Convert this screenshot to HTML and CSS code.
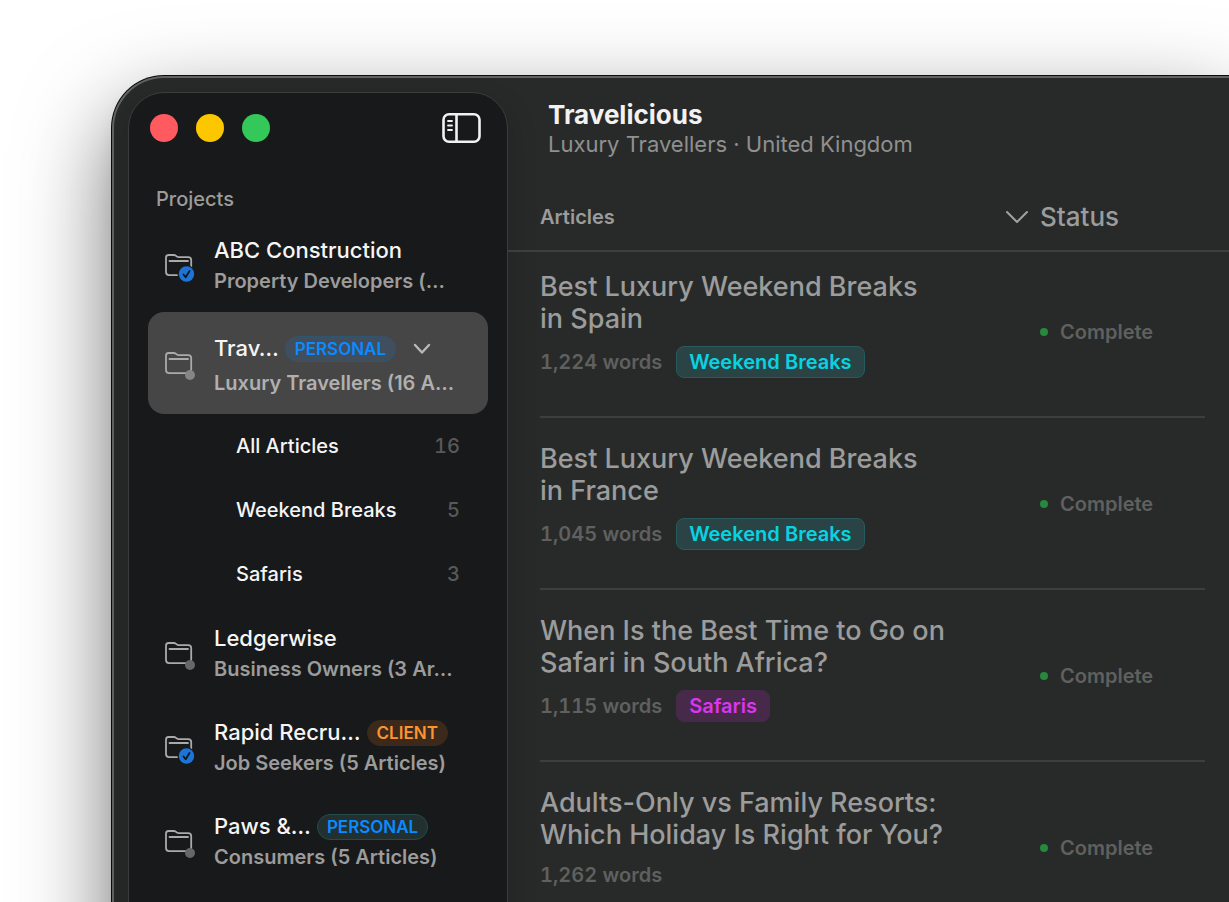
FILE: index.html
```html
<!DOCTYPE html>
<html lang="en">
    <head>
        <meta charset="utf-8">
        <meta name="viewport" content="width=device-width, initial-scale=1.0">
        <title>Travelicious</title>
        <link rel="stylesheet" href="styles.css">
    </head>
    <body>
        <!-- shared icon shapes -->
        <svg class="defs" aria-hidden="true">
            <symbol id="folder" viewBox="0 0 32 34">
                <path d="M4.5 7h5.3c1 0 1.6.3 2.3.9l.6.5c.6.5 1 .7 1.9.7h9.6c2 0 3 1 3 3v12c0 2-1 3-3 3H5c-2 0-3-1-3-3V9.800C2 8 2.800 7 4.500 7z"/>
                <path d="M5.500 13h18.500"/>
            </symbol>
        </svg>
        <div class="window">
            <aside class="sidebar">
                <div class="titlebar">
                    <div class="lights">
                        <button class="light close" aria-label="Close"></button>
                        <button class="light minimize" aria-label="Minimize"></button>
                        <button class="light zoom" aria-label="Zoom"></button>
                    </div>
                    <button class="toggle" aria-label="Toggle sidebar">
                        <svg width="40" height="32" viewBox="0 0 40 32">
                            <rect x="1.500" y="2.300" width="36" height="27.400" rx="5.500" stroke-width="2.600"/>
                            <path d="M14.500 3v26" stroke-width="2.600" stroke-linecap="butt"/>
                            <path d="M6 9h4M6 13.500h4M6 18h4" stroke-width="1.800"/>
                        </svg>
                    </button>
                </div>
                <h2 class="heading">Projects</h2>
                <ul class="projects">
                    <li class="project">
                        <svg class="icon" width="32" height="34">
                            <use href="#folder"/>
                            <circle class="cut" cx="22.500" cy="26" r="9"/>
                            <circle class="synced" cx="22.500" cy="26" r="7.700"/>
                            <path class="tick" d="M19.500 26.500l2.200 2.700 3.800-6.200"/>
                        </svg>
                        <div class="info">
                            <div class="name"><a href="#abc">ABC Construction</a></div>
                            <div class="sub">Property Developers (…</div>
                        </div>
                    </li>
                    <li class="project selected">
                        <svg class="icon" width="32" height="34">
                            <use href="#folder"/>
                            <circle class="idle" cx="26" cy="29" r="5"/>
                        </svg>
                        <div class="info">
                            <div class="name">
                                <a href="#travelicious">Trav…</a>
                                <span class="badge personal">PERSONAL</span>
                                <button class="expand" aria-label="Collapse project">
                                    <svg width="18" height="12" viewBox="0 0 18 12"><path d="M2 2l7 7.500L16 2"/></svg>
                                </button>
                            </div>
                            <div class="sub">Luxury Travellers (16 A…</div>
                        </div>
                    </li>
                    <li class="category"><a href="#all">All Articles</a><span class="count">16</span></li>
                    <li class="category"><a href="#weekend-breaks">Weekend Breaks</a><span class="count">5</span></li>
                    <li class="category"><a href="#safaris">Safaris</a><span class="count">3</span></li>
                    <li class="project">
                        <svg class="icon" width="32" height="34">
                            <use href="#folder"/>
                            <circle class="idle" cx="26" cy="29" r="5"/>
                        </svg>
                        <div class="info">
                            <div class="name"><a href="#ledgerwise">Ledgerwise</a></div>
                            <div class="sub">Business Owners (3 Ar…</div>
                        </div>
                    </li>
                    <li class="project">
                        <svg class="icon" width="32" height="34">
                            <use href="#folder"/>
                            <circle class="cut" cx="22.500" cy="26" r="9"/>
                            <circle class="synced" cx="22.500" cy="26" r="7.700"/>
                            <path class="tick" d="M19.500 26.500l2.200 2.700 3.800-6.200"/>
                        </svg>
                        <div class="info">
                            <div class="name"><a href="#rapid">Rapid Recru…</a><span class="badge client">CLIENT</span></div>
                            <div class="sub">Job Seekers (5 Articles)</div>
                        </div>
                    </li>
                    <li class="project">
                        <svg class="icon" width="32" height="34">
                            <use href="#folder"/>
                            <circle class="idle" cx="26" cy="29" r="5"/>
                        </svg>
                        <div class="info">
                            <div class="name"><a href="#paws">Paws &amp;…</a><span class="badge personal">PERSONAL</span></div>
                            <div class="sub">Consumers (5 Articles)</div>
                        </div>
                    </li>
                </ul>
            </aside>
            <main class="content">
                <header class="header">
                    <h1>Travelicious</h1>
                    <p>Luxury Travellers · United Kingdom</p>
                </header>
                <table class="articles">
                    <thead>
                        <tr>
                            <th class="col-article">Articles
                                <svg width="24" height="16" viewBox="0 0 24 16"><path d="M2 3l10 10L22 3"/></svg>
                            </th>
                            <th class="col-status">Status</th>
                        </tr>
                    </thead>
                    <tbody>
                        <tr>
                            <td>
                                <div class="title">Best Luxury Weekend Breaks<br>in Spain</div>
                                <div class="meta">1,224 words <span class="tag weekend">Weekend Breaks</span></div>
                            </td>
                            <td class="status">Complete</td>
                        </tr>
                        <tr>
                            <td>
                                <div class="title">Best Luxury Weekend Breaks<br>in France</div>
                                <div class="meta">1,045 words <span class="tag weekend">Weekend Breaks</span></div>
                            </td>
                            <td class="status">Complete</td>
                        </tr>
                        <tr>
                            <td>
                                <div class="title">When Is the Best Time to Go on<br>Safari in South Africa?</div>
                                <div class="meta">1,115 words <span class="tag safari">Safaris</span></div>
                            </td>
                            <td class="status">Complete</td>
                        </tr>
                        <tr>
                            <td>
                                <div class="title">Adults-Only vs Family Resorts:<br>Which Holiday Is Right for You?</div>
                                <div class="meta">1,262 words</div>
                            </td>
                            <td class="status">Complete</td>
                        </tr>
                    </tbody>
                </table>
            </main>
        </div>
    </body>
</html>
```
FILE: styles.css
```css
*{
    box-sizing:border-box;
}
body{
    margin:0;
    height:100vh;
    padding:76px 0 0 112px;
    overflow:hidden;
    background-color:white;
    font-family:Inter, "Liberation Sans", sans-serif;
    font-size:20px;
    font-weight:500;
    color:#9b9c9b;
}
h1, h2, p, ul{
    margin:0;
    padding:0;
}
a{
    color:inherit;
    text-decoration:none;
}
button{
    padding:0;
    border:0;
    background:none;
}
svg{
    display:block;
    fill:none;
    stroke-linecap:round;
    stroke-linejoin:round;
}
.defs{
    position:absolute;
    width:0;
    height:0;
}

/* window frame runs off the right and bottom edges */
.window{
    display:flex;
    min-height:100vh;
    padding:14px 0 0 14px;
    border:2px solid #626463;
    border-width:2px 0 0 2px;
    border-radius:52px 0 0 0;
    background-color:#282a29;
    box-shadow:0 0 0 1px #0b0c0b, 0 36px 90px rgba(0,0,0,.56);
}

.sidebar{
    flex:0 0 380px;
    padding:19px 19px 0;
    border:1px solid #3b3d3c;
    border-radius:36px 36px 0 0;
    background-color:#18191a;
    box-shadow:0 12px 24px 8px rgba(0,0,0,.1);
}
.titlebar{
    display:flex;
    align-items:center;
    justify-content:space-between;
    padding:0 6px 0 2px;
}
.lights{
    display:flex;
    gap:18px;
}
.light{
    width:28px;
    height:28px;
    border-radius:50%;
}
.close{
    background-color:#ff5a5f;
}
.minimize{
    background-color:#fdc700;
}
.zoom{
    background-color:#34c759;
}
.toggle{
    stroke:#f2f2f2;
}
.heading{
    padding:41px 8px 5px;
    font-size:20px;
    font-weight:500;
    line-height:28px;
    color:#9b9c9b;
}
.projects{
    list-style:none;
}
.project{
    display:flex;
    align-items:center;
    gap:18px;
    height:94px;
    padding:0 8px 0 16px;
    white-space:nowrap;
}
.project.selected{
    height:102px;
    border-radius:16px;
    background-color:#464646;
}
.info{
    padding-top:2px;
}
.selected .info{
    padding-top:6px;
}
.icon{
    flex:none;
    stroke:#a9aaa9;
    stroke-width:1.8;
}
.icon .cut{
    fill:#18191a;
    stroke:none;
}
.icon .synced{
    fill:#1d74d8;
    stroke:none;
}
.icon .tick{
    stroke:#10151c;
}
.icon .idle{
    fill:#666766;
    stroke:none;
}
.selected .idle{
    fill:#868686;
}
.name{
    display:flex;
    align-items:center;
    gap:6px;
    font-size:22px;
    line-height:31px;
    color:#f5f5f5;
}
.sub{
    font-size:20px;
    font-weight:600;
    line-height:31px;
}
.selected .name, .selected .sub{
    line-height:35px;
}
.selected .sub{
    color:#b0b0b0;
}
.badge{
    padding:0 9px;
    border:1px solid;
    border-radius:13px;
    font-size:17px;
    font-weight:600;
    line-height:24px;
}
.personal{
    border-color:#254b4c;
    background-color:#22302f;
    color:#0a8bff;
}
.selected .personal{
    border-color:#30566f;
    background-color:#414e5d;
}
.client{
    border-color:#3b2a1c;
    background-color:#3b2a1c;
    color:#ff9330;
}
.expand{
    padding-left:11px;
    stroke:#b8b8b8;
    stroke-width:2.4;
}
.category{
    display:flex;
    align-items:center;
    justify-content:space-between;
    height:64px;
    padding:0 28px 0 88px;
    color:#f5f5f5;
}
.count{
    font-variant-numeric:tabular-nums;
    color:#575857;
}

.content{
    flex:1;
    min-width:0;
}
.header{
    padding:8px 0 0 40px;
}
.header h1{
    font-size:26px;
    font-weight:700;
    line-height:29px;
    color:#f2f2f2;
}
.header p{
    font-size:22px;
    font-weight:400;
    line-height:30px;
    color:#8f908f;
}
.articles, .articles thead, .articles tbody{
    display:block;
}
.articles tr{
    display:grid;
    grid-template-columns:1fr 165px;
    align-items:center;
    border-bottom:2px solid #3d3f3e;
}
.articles th, .articles td{
    padding:0;
    text-align:left;
}
.articles thead tr{
    padding:42px 24px 17px 32px;
}
.col-article{
    display:flex;
    align-items:center;
    justify-content:space-between;
    font-weight:600;
}
.col-article svg{
    margin-right:11px;
    stroke:#a0a1a0;
    stroke-width:2;
}
.articles .col-status{
    font-size:26px;
    font-weight:500;
    line-height:32px;
}
.articles tbody tr{
    height:172px;
    margin:0 24px 0 32px;
}
.articles tbody tr:first-child{
    margin-top:-6px;
}
.articles td:first-child{
    align-self:start;
    padding-top:25px;
}
.title{
    font-size:27px;
    line-height:32px;
}
.meta{
    display:flex;
    align-items:center;
    gap:14px;
    margin-top:11px;
    font-weight:600;
    font-variant-numeric:tabular-nums;
    line-height:26px;
    color:#5f605f;
}
.tag{
    padding:2px 12px;
    border:1px solid;
    border-radius:8px;
    line-height:26px;
}
.weekend{
    border-color:#265a5d;
    background-color:#2a4446;
    color:#08d3e2;
}
.safari{
    border-color:#472a4a;
    background-color:#472a4a;
    color:#dc35f2;
}
.articles .status{
    display:flex;
    align-items:center;
    gap:12px;
    padding-top:2px;
    font-weight:600;
    color:#5f605f;
}
.status::before{
    content:"";
    width:8px;
    height:8px;
    border-radius:50%;
    background-color:#268a3e;
}
```
